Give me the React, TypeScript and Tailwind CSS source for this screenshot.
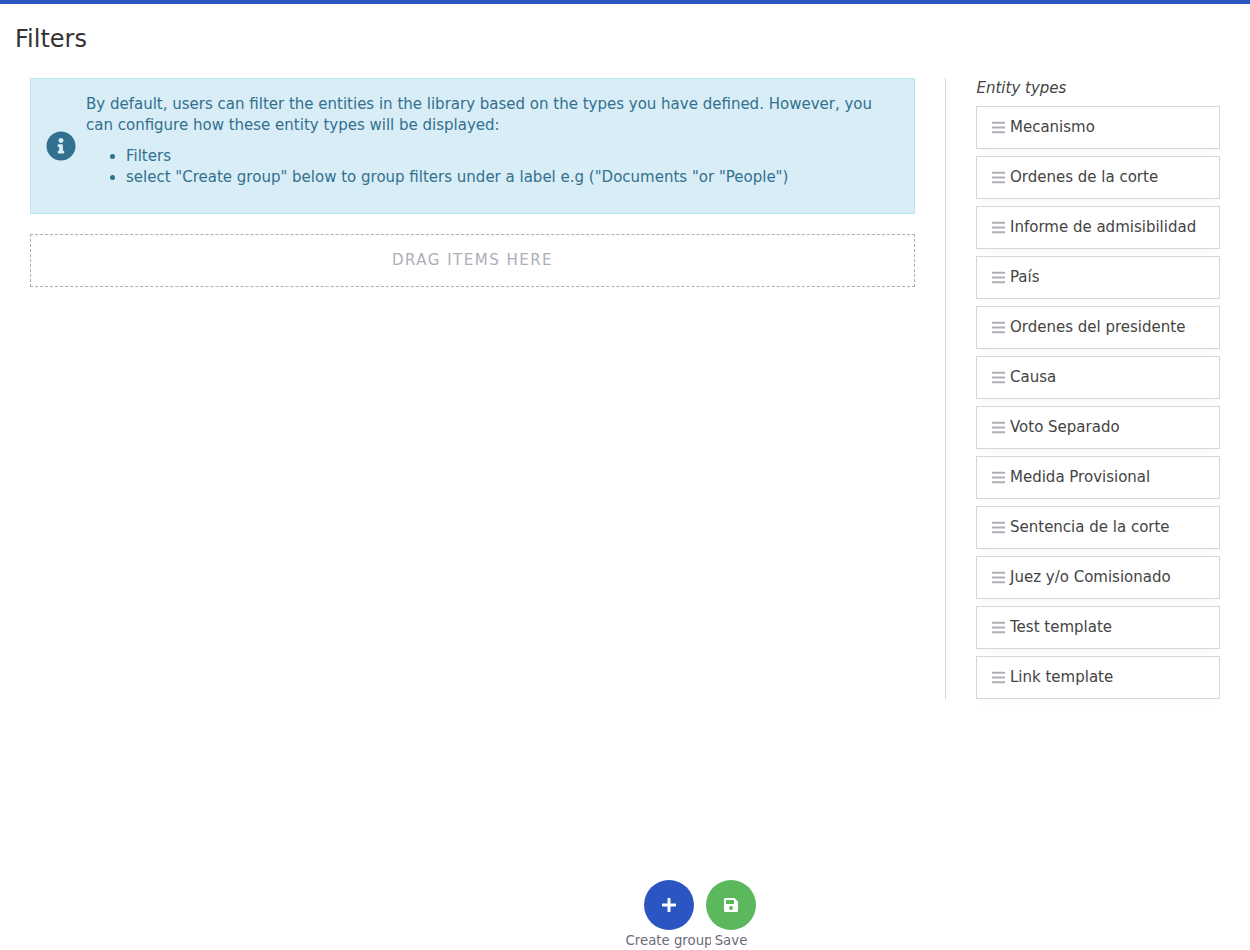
import React from "react";
import { FaInfoCircle, FaPlus } from "react-icons/fa";

const types = ["Mecanismo", "Ordenes de la corte", "Informe de admisibilidad", "País", "Ordenes del presidente", "Causa", "Voto Separado", "Medida Provisional", "Sentencia de la corte", "Juez y/o Comisionado", "Test template", "Link template"];

function BarsIcon() {
  return (
    <svg viewBox="0 0 13 13" className="mr-[5px] size-[13px] shrink-0 fill-[#aeaeb8]">
      <path d="M0 .75h13v2H0zM0 5.5h13v2H0zM0 10.2h13v2H0z" />
    </svg>
  );
}

function SaveIcon() {
  return (
    <svg viewBox="0 0 14 14" className="size-[14px] fill-white">
      <path fillRule="evenodd" d="M1.5 0H10.4L14 3.4V12.5A1.5 1.5 0 0 1 12.5 14H1.5A1.5 1.5 0 0 1 0 12.5V1.5A1.5 1.5 0 0 1 1.5 0ZM2 2V6H10V2ZM7 8A2 2 0 1 0 7 12A2 2 0 1 0 7 8Z" />
    </svg>
  );
}

export default function App() {
  return (
    <div className="flex h-[950px] w-full flex-col overflow-hidden border-t-4 border-[#2b56c1] bg-white font-['DejaVu_Sans',sans-serif] text-[15px] leading-[21px] text-[#444]">
      <h1 className="px-[15px] pt-[18px] text-[24px] leading-[34px] text-[#333]">Filters</h1>
      <div className="mt-[22px] flex px-[30px]">
        <main className="w-[885px] shrink-0">
          <div className="flex h-[136px] items-center border border-[#b6e8f1] bg-[#d9edf7] pl-[15px] text-[#31708f]">
            <FaInfoCircle size={30} className="shrink-0" />
            <div className="ml-[10px] pb-[10px]">
              <p className="w-[800px]">By default, users can filter the entities in the library based on the types you have defined. However, you can configure how these entity types will be displayed:</p>
              <ul className="mt-[10px] list-disc pl-[40px]">
                <li>Filters</li>
                <li>select "Create group" below to group filters under a label e.g ("Documents "or "People")</li>
              </ul>
            </div>
          </div>
          <div className="mt-5 flex h-[53px] items-center justify-center border border-dashed border-[#aeaeb8] tracking-[1.5px] text-[#aeaeb8]">DRAG ITEMS HERE</div>
        </main>
        <aside className="ml-[30px] h-[621px] w-[275px] border-l border-[#d5d5dc] pl-[30px]">
          <div className="h-[28px] pl-[0.5px] italic">Entity types</div>
          <ul className="flex flex-col gap-[7px]">
            {types.map((t) => (
              <li key={t} className="flex h-[43px] items-center border border-[#d5d5dc] bg-white pl-[15px] shadow-[0_8px_10px_-6px_rgba(0,0,0,0.045)]">
                <BarsIcon />
                <span>{t}</span>
              </li>
            ))}
          </ul>
        </aside>
      </div>
      <footer className="mt-auto flex h-[70px] justify-center pl-[126px] text-[13.3px] leading-[18px] text-[#6b6b7b]">
        <button className="flex w-[86px] flex-col items-center">
          <span className="flex size-[50px] shrink-0 items-center justify-center rounded-full bg-[#2b56c1] text-white"><FaPlus size={16} /></span>
          <span className="mt-[2px] mr-[2px] w-[85px] overflow-hidden whitespace-nowrap text-left">Create group</span>
        </button>
        <button className="flex w-[38px] flex-col items-center">
          <span className="flex size-[50px] shrink-0 items-center justify-center rounded-full bg-[#5cb85c]"><SaveIcon /></span>
          <span className="mt-[2px]">Save</span>
        </button>
      </footer>
    </div>
  );
}
